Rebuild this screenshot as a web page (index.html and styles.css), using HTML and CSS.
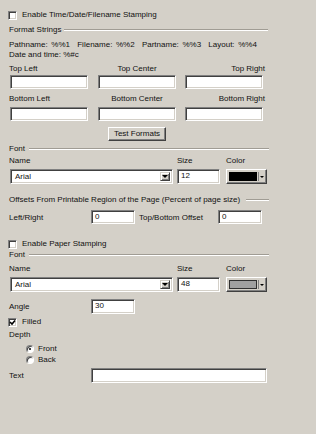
FILE: index.html
```html
<!DOCTYPE html>
<html>
<head>
<meta charset="utf-8">
<link rel="stylesheet" href="styles.css">
</head>
<body>
<div class="panel">
  <label class="check r-top"><span class="cb"></span><span>Enable Time/Date/Filename Stamping</span></label>

  <div class="group g-format"><span>Format Strings</span><span class="rule"></span></div>
  <div class="note n1">Pathname: %%1&nbsp; Filename: %%2&nbsp; Partname: %%3&nbsp; Layout: %%4</div>
  <div class="note">Date and time: %#c</div>

  <div class="tri lab1"><span>Top Left</span><span class="c">Top Center</span><span class="r">Top Right</span></div>
  <div class="tri in1"><span class="field"></span><span class="field"></span><span class="field"></span></div>
  <div class="tri lab2"><span>Bottom Left</span><span class="c">Bottom Center</span><span class="r">Bottom Right</span></div>
  <div class="tri in2"><span class="field"></span><span class="field"></span><span class="field"></span></div>

  <div class="btnrow"><span class="btn">Test Formats</span></div>

  <div class="group g-font1"><span>Font</span><span class="rule"></span></div>
  <div class="fontlab n-name1"><span>Name</span><span>Size</span><span>Color</span></div>
  <div class="fontrow f1">
    <span class="combo"><span class="val">Arial</span><span class="drop"><i class="tri-down"></i></span></span>
    <span class="field size">12</span>
    <span class="colorbtn"><span class="swatch black"></span><span class="cdrop"><i class="tri-down sm"></i></span></span>
  </div>

  <div class="group g-off"><span>Offsets From Printable Region of the Page (Percent of page size)</span><span class="rule"></span></div>
  <div class="offrow">
    <span>Left/Right</span><span class="field num">0</span><span class="lbl2">Top/Bottom Offset</span><span class="field num">0</span>
  </div>

  <label class="check r-paper"><span class="cb"></span><span>Enable Paper Stamping</span></label>
  <div class="group g-font2"><span>Font</span><span class="rule"></span></div>
  <div class="fontlab n-name2"><span>Name</span><span>Size</span><span>Color</span></div>
  <div class="fontrow f2">
    <span class="combo"><span class="val">Arial</span><span class="drop"><i class="tri-down"></i></span></span>
    <span class="field size">48</span>
    <span class="colorbtn"><span class="swatch grey"></span><span class="cdrop"><i class="tri-down sm"></i></span></span>
  </div>

  <div class="offrow angle"><span>Angle</span><span class="field num">30</span></div>

  <label class="check r-filled"><span class="cb on"><svg viewBox="0 0 7 7" width="7" height="7"><path d="M1 3 L3 5 L6 1.5" fill="none" stroke="#000" stroke-width="1.6"/></svg></span><span>Filled</span></label>
  <div class="line depth">Depth</div>
  <label class="radio r-front"><span class="rb on"></span><span>Front</span></label>
  <label class="radio r-back"><span class="rb"></span><span>Back</span></label>
  <div class="offrow textrow"><span>Text</span><span class="field wide"></span></div>
</div>
</body>
</html>
```
FILE: styles.css
```css
html, body { margin: 0; padding: 0; }
body {
  background: #d4d0c8;
  font-family: "Liberation Sans", Arial, sans-serif;
  font-size: 8px;
  color: #111;
  width: 316px;
  height: 434px;
  overflow: hidden;
}
.panel { padding: 7px 0 0 8px; width: 260px; }

.check, .radio { display: flex; align-items: center; height: 10px; line-height: 10px; }
.cb {
  width: 7px; height: 7px; background: #fff; margin-right: 5px;
  border-top: 1px solid #808080; border-left: 1px solid #808080;
  border-right: 1px solid #fff; border-bottom: 1px solid #fff;
  box-shadow: inset 1px 1px #404040, inset -1px -1px #d4d0c8;
  display: inline-flex; align-items: center; justify-content: center;
}
.cb svg { display: block; }
.r-top { margin-top: 2px; height: 12px; }

.group { display: flex; align-items: center; height: 10px; line-height: 10px; padding-left: 1px; }
.group .rule { flex: 1; height: 0; border-top: 1px solid #a09c94; border-bottom: 1px solid #fff; margin-left: 4px; }
.g-format { margin-top: 4px; width: 259px; }
.g-format .rule { margin-left: 3px; }
.note { height: 10px; line-height: 10px; padding-left: 1px; }
.n1 { margin-top: 5px; word-spacing: 1.4px; }

.tri { display: flex; justify-content: space-between; width: 256px; padding-left: 1px; }
.tri span { line-height: 10px; }
.tri .c { width: 78px; text-align: center; }
.tri span:first-child { width: 78px; }
.tri .r { width: 78px; text-align: right; }
.lab1 { margin-top: 4px; }
.lab2 { margin-top: 5px; }
.in1 { margin-top: 1px; padding-left: 2px; width: 253px; }
.in2 { margin-top: 3px; padding-left: 2px; width: 253px; }

.field {
  display: block; background: #fff; box-sizing: border-box; height: 14px;
  border-top: 1px solid #808080; border-left: 1px solid #808080;
  border-right: 1px solid #fff; border-bottom: 1px solid #fff;
  box-shadow: inset 1px 1px #404040, inset -1px -1px #d4d0c8;
  line-height: 12px; padding-left: 3px;
}
.tri .field { width: 78px; }

.btnrow { display: flex; margin-top: 6px; padding-left: 100px; }
.btn {
  width: 58px; height: 14px; box-sizing: border-box; text-align: center; line-height: 11px;
  border-top: 1px solid #fff; border-left: 1px solid #fff;
  border-right: 1px solid #404040; border-bottom: 1px solid #404040;
  box-shadow: inset -1px -1px #808080;
}

.g-font1 { margin-top: 3px; width: 260px; }
.g-font2 { margin-top: 1px; width: 260px; }
.fontlab { display: flex; height: 10px; line-height: 10px; padding-left: 1px; }
.fontlab span:nth-child(1) { width: 168px; }
.fontlab span:nth-child(2) { width: 49px; }
.n-name1 { margin-top: 2px; }
.n-name2 { margin-top: 4px; }
.fontrow { display: flex; margin-top: 3px; padding-left: 2px; height: 15px; }
.combo {
  display: flex; width: 163px; height: 15px; box-sizing: border-box; background: #fff;
  border-top: 1px solid #808080; border-left: 1px solid #808080;
  border-right: 1px solid #fff; border-bottom: 1px solid #fff;
  box-shadow: inset 1px 1px #404040, inset -1px -1px #d4d0c8;
  padding: 2px;
}
.combo .val { flex: 1; line-height: 9px; padding-left: 2px; }
.drop, .cdrop {
  width: 10px; box-sizing: border-box; background: #d4d0c8;
  border-top: 1px solid #d4d0c8; border-left: 1px solid #d4d0c8;
  border-right: 1px solid #404040; border-bottom: 1px solid #404040;
  box-shadow: inset 1px 1px #fff, inset -1px -1px #808080;
  display: flex; align-items: center; justify-content: center;
}
.tri-down { display: block; width: 0; height: 0; border-left: 3px solid transparent; border-right: 3px solid transparent; border-top: 3px solid #000; }
.tri-down.sm { border-left-width: 2px; border-right-width: 2px; border-top-width: 2px; }
.size { width: 43px; height: 15px; margin-left: 4px; line-height: 12px; }
.colorbtn {
  display: flex; width: 41px; height: 15px; box-sizing: border-box; margin-left: 6px;
  border-top: 1px solid #fff; border-left: 1px solid #fff;
  border-right: 1px solid #404040; border-bottom: 1px solid #404040;
  box-shadow: inset -1px -1px #808080;
  padding: 2px 1px 2px 2px;
}
.swatch { flex: 1; border: 1px solid #000; margin-right: 1px; }
.swatch.black { background: #000; }
.swatch.grey { background: #a0a0a0; border-color: #303030; }
.cdrop { width: 7px; border: none; box-shadow: inset 1px 0 #808080; background: #d4d0c8; }

.g-off { margin-top: 11px; width: 260px; }
.g-off .rule { margin-left: 6px; }
.offrow { display: flex; align-items: center; margin-top: 5px; height: 14px; padding-left: 1px; }
.offrow > span:first-child { width: 82px; }
.num { width: 44px; height: 14px; }
.lbl2 { width: 83px; padding-left: 4px; box-sizing: border-box; }

.r-paper { margin-top: 15px; }
.angle { margin-top: 7px; height: 15px; }
.angle .num { height: 15px; }
.r-filled { margin-top: 3px; }
.line { height: 10px; line-height: 10px; padding-left: 1px; }
.depth { margin-top: 3px; }
.radio { padding-left: 18px; }
.r-front { margin-top: 4px; }
.r-back { margin-top: 1px; }
.rb {
  width: 8px; height: 8px; border-radius: 50%; background: #fff; box-sizing: border-box; margin-right: 4px;
  border: 1px solid; border-color: #808080 #fff #fff #808080;
  box-shadow: inset 1px 1px #404040;
  display: inline-flex; align-items: center; justify-content: center;
}
.rb.on::after { content: ""; width: 2px; height: 2px; background: #000; border-radius: 50%; }
.textrow { margin-top: 3px; height: 15px; }
.wide { width: 176px; height: 15px; }
```
